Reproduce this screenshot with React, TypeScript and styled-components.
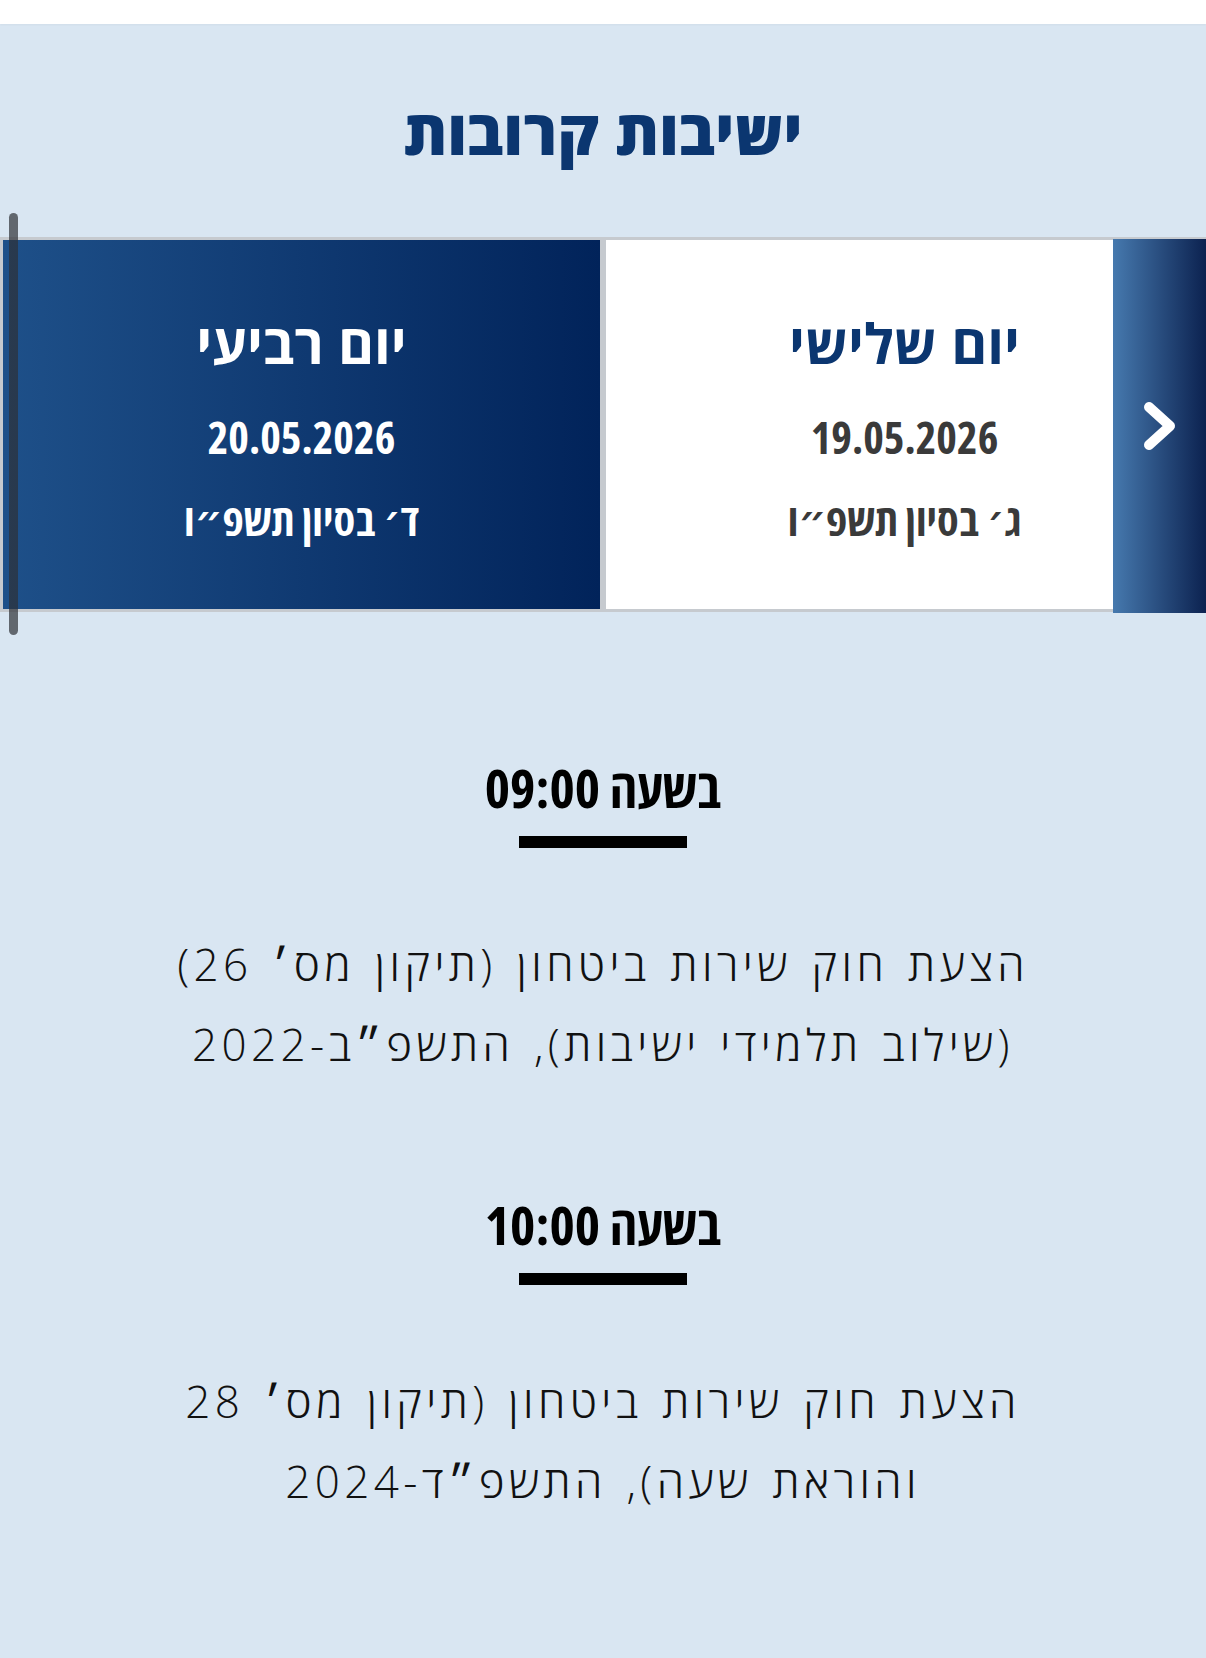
import React from 'react';
import styled, { createGlobalStyle } from 'styled-components';

const GlobalStyle = createGlobalStyle`
  html, body {
    margin: 0;
    padding: 0;
    background: #d9e6f2;
  }
  body {
    font-family: 'Open Sans', 'DejaVu Sans', sans-serif;
  }
`;

const Page = styled.div`
  direction: rtl;
  width: 100%;
  min-height: 1658px;
  background: #d9e6f2;
`;

const TopStrip = styled.div`
  height: 24px;
  background: #ffffff;
  box-shadow: 0 1px 2px rgba(0, 0, 0, 0.04);
`;

const Header = styled.div`
  height: 213px;
  display: flex;
  align-items: center;
  justify-content: center;
`;

const Title = styled.h2`
  margin: 0;
  font-family: 'Open Sans', 'DejaVu Sans', sans-serif;
  font-weight: 800;
  font-size: 62px;
  line-height: 1;
  color: #0b3670;
`;

const Slider = styled.div`
  position: relative;
  height: 375px;
`;

const Track = styled.div`
  display: flex;
  height: 100%;
`;

const DayCard = styled.button<{ $active?: boolean }>`
  flex: 0 0 50%;
  box-sizing: border-box;
  height: 100%;
  border: 3px solid #c6cacf;
  padding: 7px 0 0;
  display: flex;
  flex-direction: column;
  align-items: center;
  justify-content: center;
  font-family: 'Open Sans', 'DejaVu Sans Condensed', sans-serif;
  font-stretch: 75%;
  cursor: pointer;
  background: ${(p) =>
    p.$active ? 'linear-gradient(90deg, #1e5089 0%, #01235a 100%)' : '#ffffff'};
  color: ${(p) => (p.$active ? '#ffffff' : '#3a3a3a')};
`;

const DayName = styled.div<{ $active?: boolean }>`
  font-size: 55px;
  font-stretch: 100%;
  font-weight: 700;
  line-height: 1;
  color: ${(p) => (p.$active ? '#ffffff' : '#0b3670')};
`;

const DayDate = styled.div`
  margin-top: 45px;
  font-size: 44px;
  font-weight: 700;
  line-height: 1;
`;

const HebDate = styled.div`
  margin-top: 38px;
  font-size: 44px;
  font-weight: 700;
  line-height: 1;
`;

const NextButton = styled.button`
  position: absolute;
  top: 2px;
  right: 0;
  width: 93px;
  height: 374px;
  border: 0;
  padding: 0;
  display: flex;
  align-items: center;
  justify-content: center;
  background: linear-gradient(90deg, #4679ae 0%, #0c2250 100%);
  cursor: pointer;
`;

const Handle = styled.div`
  position: absolute;
  left: 9px;
  top: -24px;
  width: 9px;
  height: 422px;
  border-radius: 5px;
  background: rgba(45, 48, 54, 0.7);
`;

const Schedule = styled.div`
  padding-top: 145px;
  display: flex;
  flex-direction: column;
  align-items: center;
  gap: 110px;
`;

const Session = styled.section`
  display: flex;
  flex-direction: column;
  align-items: center;
`;

const Hour = styled.h3`
  margin: 0;
  font-family: 'Open Sans', 'DejaVu Sans Condensed', sans-serif;
  font-stretch: 75%;
  font-weight: 700;
  font-size: 54px;
  line-height: 60px;
  color: #000;
`;

const Underline = styled.div`
  margin-top: 19px;
  width: 168px;
  height: 12px;
  background: #000;
`;

const Subject = styled.p`
  margin: 76px 0 0;
  font-family: 'Open Sans', 'Liberation Sans', sans-serif;
  font-weight: 300;
  font-size: 44px;
  letter-spacing: 4.4px;
  word-spacing: 4px;
  line-height: 80px;
  text-align: center;
  color: #111;
  white-space: nowrap;
`;

const days = [
  { name: 'יום שלישי', date: '19.05.2026', heb: 'ג׳ בסיון תשפ״ו', active: false },
  { name: 'יום רביעי', date: '20.05.2026', heb: 'ד׳ בסיון תשפ״ו', active: true },
];

const sessions = [
  {
    hour: '09:00',
    lines: ['הצעת חוק שירות ביטחון (תיקון מס׳ 26)', '(שילוב תלמידי ישיבות), התשפ״ב-2022'],
  },
  {
    hour: '10:00',
    lines: ['הצעת חוק שירות ביטחון (תיקון מס׳ 28', 'והוראת שעה), התשפ״ד-2024'],
  },
];

export default function App() {
  return (
    <Page>
      <GlobalStyle />
      <TopStrip />
      <Header>
        <Title>ישיבות קרובות</Title>
      </Header>

      <Slider>
        <Track>
          {days.map((d) => (
            <DayCard key={d.date} $active={d.active} type='button'>
              <DayName $active={d.active}>{d.name}</DayName>
              <DayDate>{d.date}</DayDate>
              <HebDate>{d.heb}</HebDate>
            </DayCard>
          ))}
        </Track>
        <NextButton type='button' aria-label='הבא'>
          <svg width='40' height='56' viewBox='0 0 40 56' fill='none'>
            <path
              d='M9 9 L30 28 L9 47'
              stroke='#ffffff'
              strokeWidth='10'
              strokeLinecap='round'
              strokeLinejoin='round'
            />
          </svg>
        </NextButton>
        <Handle />
      </Slider>

      <Schedule>
        {sessions.map((s) => (
          <Session key={s.hour}>
            <Hour>בשעה {s.hour}</Hour>
            <Underline />
            <Subject>
              {s.lines[0]}
              <br />
              {s.lines[1]}
            </Subject>
          </Session>
        ))}
      </Schedule>
    </Page>
  );
}
